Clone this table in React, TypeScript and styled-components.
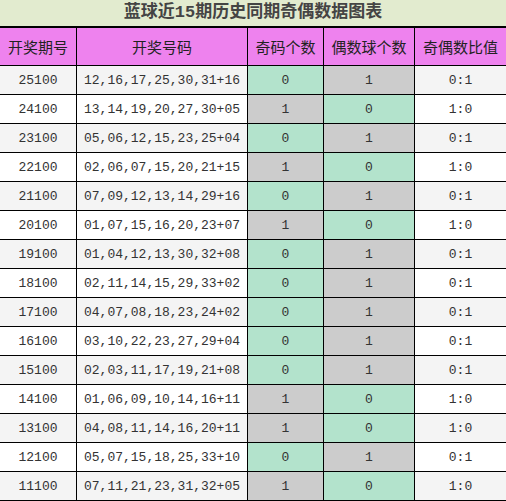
import React, { FC } from "react";
import styled, { createGlobalStyle } from "styled-components";

const GlobalStyle = createGlobalStyle`
  html, body {
    margin: 0;
    padding: 0;
    background: #ffffff;
  }
`;

const Frame = styled.div`
  width: 506px;
  height: 501px;
  overflow: hidden;
`;

const Table = styled.table`
  border-collapse: collapse;
  table-layout: fixed;
  width: 507px;
  margin: -1px 0 0 -1px;
  font-family: "Liberation Mono", "Noto Sans CJK SC", monospace;
`;

const TitleCell = styled.th`
  height: 26px;
  padding: 0;
  background: #e2ebcf;
  border: 1px solid #000;
  border-bottom-width: 2px;
  color: #444;
  font-size: 17px;
  font-weight: bold;
  text-align: center;
  line-height: 26px;
`;

const HeadCell = styled.th`
  height: 37px;
  padding: 0;
  background: #ee82ee;
  border: 1px solid #000;
  color: #222;
  font-family: "Noto Sans CJK SC", sans-serif;
  font-size: 15px;
  font-weight: normal;
  text-align: center;
`;

const Row = styled.tr<{ $alt: boolean }>`
  background: ${(p) => (p.$alt ? "#f4f4f4" : "#ffffff")};
`;

const Cell = styled.td<{ $tone?: "green" | "gray" }>`
  height: 28px;
  padding: 0;
  border: 1px solid #000;
  color: #333;
  font-size: 13px;
  text-align: center;
  background: ${(p) =>
    p.$tone === "green" ? "#b3e3cc" : p.$tone === "gray" ? "#cccccc" : "transparent"};
`;

interface IDraw {
  issue: string;
  nums: string;
  odd: number;
}

const draws: IDraw[] = [
  { issue: "25100", nums: "12,16,17,25,30,31+16", odd: 0 },
  { issue: "24100", nums: "13,14,19,20,27,30+05", odd: 1 },
  { issue: "23100", nums: "05,06,12,15,23,25+04", odd: 0 },
  { issue: "22100", nums: "02,06,07,15,20,21+15", odd: 1 },
  { issue: "21100", nums: "07,09,12,13,14,29+16", odd: 0 },
  { issue: "20100", nums: "01,07,15,16,20,23+07", odd: 1 },
  { issue: "19100", nums: "01,04,12,13,30,32+08", odd: 0 },
  { issue: "18100", nums: "02,11,14,15,29,33+02", odd: 0 },
  { issue: "17100", nums: "04,07,08,18,23,24+02", odd: 0 },
  { issue: "16100", nums: "03,10,22,23,27,29+04", odd: 0 },
  { issue: "15100", nums: "02,03,11,17,19,21+08", odd: 0 },
  { issue: "14100", nums: "01,06,09,10,14,16+11", odd: 1 },
  { issue: "13100", nums: "04,08,11,14,16,20+11", odd: 1 },
  { issue: "12100", nums: "05,07,15,18,25,33+10", odd: 0 },
  { issue: "11100", nums: "07,11,21,23,31,32+05", odd: 1 },
];

const heads = ["开奖期号", "开奖号码", "奇码个数", "偶数球个数", "奇偶数比值"];

const App: FC = () => {
  return (
    <Frame>
      <GlobalStyle />
      <Table>
        <colgroup>
          <col style={{ width: 77 }} />
          <col style={{ width: 171 }} />
          <col style={{ width: 76 }} />
          <col style={{ width: 91 }} />
          <col style={{ width: 92 }} />
        </colgroup>
        <thead>
          <tr>
            <TitleCell colSpan={5}>蓝球近15期历史同期奇偶数据图表</TitleCell>
          </tr>
          <tr>
            {heads.map((h) => (
              <HeadCell key={h}>{h}</HeadCell>
            ))}
          </tr>
        </thead>
        <tbody>
          {draws.map((d, i) => {
            const even = 1 - d.odd;
            return (
              <Row key={d.issue} $alt={i % 2 === 0}>
                <Cell>{d.issue}</Cell>
                <Cell>{d.nums}</Cell>
                <Cell $tone={d.odd ? "gray" : "green"}>{d.odd}</Cell>
                <Cell $tone={even ? "gray" : "green"}>{even}</Cell>
                <Cell>
                  {d.odd}:{even}
                </Cell>
              </Row>
            );
          })}
        </tbody>
      </Table>
    </Frame>
  );
};

export default App;
